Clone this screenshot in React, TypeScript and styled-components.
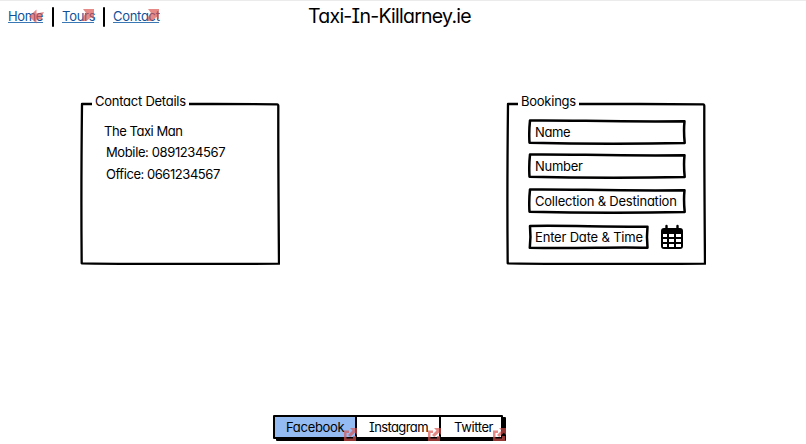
import React from "react";
import styled, { createGlobalStyle } from "styled-components";

const GlobalStyle = createGlobalStyle`
  * { box-sizing: border-box; }
  body { margin: 0; background: #fff; overflow: hidden; }
`;

const Page = styled.div`
  width: 806px;
  height: 444px;
  display: flex;
  flex-direction: column;
  border-top: 1px solid #ebebeb;
  color: #000;
  font: 13px/16px Inter, sans-serif;
  font-feature-settings: "cv11", "cv08";
`;

const Label = styled.span<{ $spacing?: number }>`
  white-space: nowrap;
  letter-spacing: ${(p) => p.$spacing ?? 0}px;
`;

const Header = styled.header`
  display: grid;
  grid-template-columns: 308px 1fr;
  height: 101px;
  align-items: start;
`;

const Nav = styled.nav`
  display: flex;
  padding: 6px 0 0 8px;
`;

const NavItem = styled.div<{ $width: number }>`
  position: relative;
  width: ${(p) => p.$width}px;
  height: 20px;
  padding-top: 2px;
`;

const Divider = styled.div`
  width: 2px;
  height: 20px;
  margin: 0 8px 0 9px;
  background: #000;
  border-radius: 1px;
`;

const NavLink = styled.a<{ $spacing: number }>`
  display: block;
  height: 14px;
  line-height: 14px;
  white-space: nowrap;
  letter-spacing: ${(p) => p.$spacing}px;
  color: #10529a;
  border-bottom: 1px solid #3978b5;
`;

const Marker = styled.svg<{ $right: number; $top: number; $size: number }>`
  position: absolute;
  z-index: 1;
  right: ${(p) => p.$right}px;
  top: ${(p) => p.$top}px;
  width: ${(p) => p.$size}px;
  height: ${(p) => p.$size}px;
  fill: #d9534f;
  opacity: 0.68;
`;

const Title = styled.h1`
  margin: 2px 0 0;
  font-size: 19.5px;
  line-height: 26px;
  font-weight: 400;
  letter-spacing: -0.75px;
`;

const Main = styled.main`
  display: flex;
  gap: 226px;
  padding-left: 80px;
  height: 313px;
`;

const Panel = styled.section`
  position: relative;
  width: 200px;
  height: 163px;
`;

const Sketch = styled.svg`
  position: absolute;
  inset: 0;
  width: 100%;
  height: 100%;
  fill: none;
  stroke: #000;
  stroke-linejoin: round;
  stroke-linecap: round;
  pointer-events: none;
`;

const Legend = styled.h2<{ $spacing: number }>`
  position: absolute;
  left: 12px;
  top: -9px;
  margin: 0;
  padding: 0 3px;
  background: #fff;
  font-size: 13px;
  font-weight: 400;
  white-space: nowrap;
  letter-spacing: ${(p) => p.$spacing}px;
`;

const Details = styled.div`
  display: flex;
  flex-direction: column;
  gap: 5px;
  padding: 21px 0 0 24px;
`;

const Phones = styled.div`
  display: flex;
  flex-direction: column;
  gap: 6px;
  padding-left: 2px;
`;

const Form = styled.div`
  display: flex;
  flex-direction: column;
  gap: 8px;
  padding: 17px 0 0 22px;
`;

const LowerFields = styled.div`
  display: flex;
  flex-direction: column;
  gap: 10px;
  padding-top: 1px;
`;

const Field = styled.div<{ $width: number }>`
  position: relative;
  display: flex;
  align-items: center;
  width: ${(p) => p.$width}px;
  height: 26px;
  padding: 0 0 1px 7px;
`;

const DateRow = styled.div`
  display: flex;
  gap: 11px;
  align-items: center;
`;

const Calendar = styled.svg`
  width: 24px;
  height: 26px;
`;

const Footer = styled.footer`
  padding-left: 273px;
`;

const Tabs = styled.div`
  display: flex;
  width: 230px;
  height: 24px;
  border: 2px solid #000;
  border-radius: 1px;
  box-shadow: 3px 2px 0 #000;
`;

const Tab = styled.div<{ $width: number; $active?: boolean; $indent: number }>`
  position: relative;
  width: ${(p) => p.$width}px;
  height: 20px;
  padding: 2px 0 0 ${(p) => p.$indent}px;
  background: ${(p) => (p.$active ? "#94bbf2" : "#fff")};
  & + & {
    border-left: 2px solid #000;
  }
`;

const fieldFrames: Record<number, string> = {
  158: "M2 1.5 C45 1 78 3 156.5 2.3 Q155.5 12 156.7 24 C109 25 53 25 1.5 23.7 Q.8 13 2 1.5Z",
  121: "M2 2 C35 1.2 75 3 119.5 2.7 Q118.5 12 119.5 23.7 C84 22.7 53 24.7 1.8 23.7 Q3 13 2 2Z",
};

const SketchField = ({ text, spacing = 0, width = 158 }: { text: string; spacing?: number; width?: number }) => (
  <Field $width={width}>
    <Sketch viewBox={`0 0 ${width} 26`} strokeWidth="2.5">
      <path d={fieldFrames[width]} />
    </Sketch>
    <Label $spacing={spacing}>{text}</Label>
  </Field>
);

const PanelFrame = () => (
  <Sketch viewBox="0 0 200 163" strokeWidth="2.3">
    <path d="M2 2 C70 1.5 132 2 197 2.3 Q198.5 2.3 198.3 5 Q198.2 65 199 161.7 C132 162 78 162.5 1.7 161.3 Q1 92 2 2Z" />
  </Sketch>
);

const NorthEast = () => (
  <Marker viewBox="0 0 12 12" $right={0} $top={2} $size={12}>
    <path d="M1 0H12V10.5L9.5 8L4.5 12L0 12L1 8L4 4Z" />
  </Marker>
);

const External = ({ right = -1 }: { right?: number }) => (
  <Marker viewBox="0 0 13 13" $right={right} $top={11} $size={13}>
    <path d="M0 2.5H5V5H2.5V10.5H9V8H12V13H0ZM6 0H13V7L10.8 4.8L6.2 9L4 7L8.5 2.5Z" />
  </Marker>
);

export default function App() {
  return (
    <Page>
      <GlobalStyle />
      <Header>
        <Nav>
          <NavItem $width={35}>
            <NavLink $spacing={-0.4}>Home</NavLink>
            <Marker viewBox="0 0 15 15" $right={-1} $top={2} $size={15}>
              <path d="M0 7.5L7.5 0.5V4.5L15 3L12.5 7.5L14 10.5L7.5 10.5V14.5Z" />
            </Marker>
          </NavItem>
          <Divider />
          <NavItem $width={32}>
            <NavLink $spacing={-0.25}>Tours</NavLink>
            <NorthEast />
          </NavItem>
          <Divider />
          <NavItem $width={46}>
            <NavLink $spacing={-0.3}>Contact</NavLink>
            <NorthEast />
          </NavItem>
        </Nav>
        <Title>Taxi-In-Killarney.ie</Title>
      </Header>
      <Main>
        <Panel>
          <PanelFrame />
          <Legend $spacing={-0.25}>Contact Details</Legend>
          <Details>
            <Label $spacing={-0.45}>The Taxi Man</Label>
            <Phones>
              <Label $spacing={-0.38}>Mobile: 0891234567</Label>
              <Label $spacing={-0.45}>Office: 0661234567</Label>
            </Phones>
          </Details>
        </Panel>
        <Panel>
          <PanelFrame />
          <Legend $spacing={-0.25}>Bookings</Legend>
          <Form>
            <SketchField text="Name" spacing={-0.4} />
            <SketchField text="Number" spacing={-0.3} />
            <LowerFields>
              <SketchField text="Collection & Destination" spacing={-0.22} />
              <DateRow>
                <SketchField text="Enter Date & Time" width={121} spacing={-0.18} />
                <Calendar viewBox="0 0 24 26">
                  <rect x="1" y="4" width="22" height="21" rx="3" />
                  <path d="M6.5 2V5M17.5 2V5" stroke="#000" strokeWidth="2.4" strokeLinecap="round" />
                  <path
                    fill="#fff"
                    d="M3 10h4v3H3zM9 10h5v3H9zM16 10h5v3h-5zM3 15h4v3H3zM9 15h5v3H9zM16 15h5v3h-5zM3 20h4v3H3zM9 20h5v3H9zM16 20h5v3h-5z"
                  />
                </Calendar>
              </DateRow>
            </LowerFields>
          </Form>
        </Panel>
      </Main>
      <Footer>
        <Tabs>
          <Tab $width={80} $indent={11} $active>
            <Label $spacing={-0.3}>Facebook</Label>
            <External right={-2} />
          </Tab>
          <Tab $width={84} $indent={12}>
            <Label $spacing={-0.6}>Instagram</Label>
            <External right={-2} />
          </Tab>
          <Tab $width={62} $indent={13}>
            <Label $spacing={-0.4}>Twitter</Label>
            <External right={-5} />
          </Tab>
        </Tabs>
      </Footer>
    </Page>
  );
}
